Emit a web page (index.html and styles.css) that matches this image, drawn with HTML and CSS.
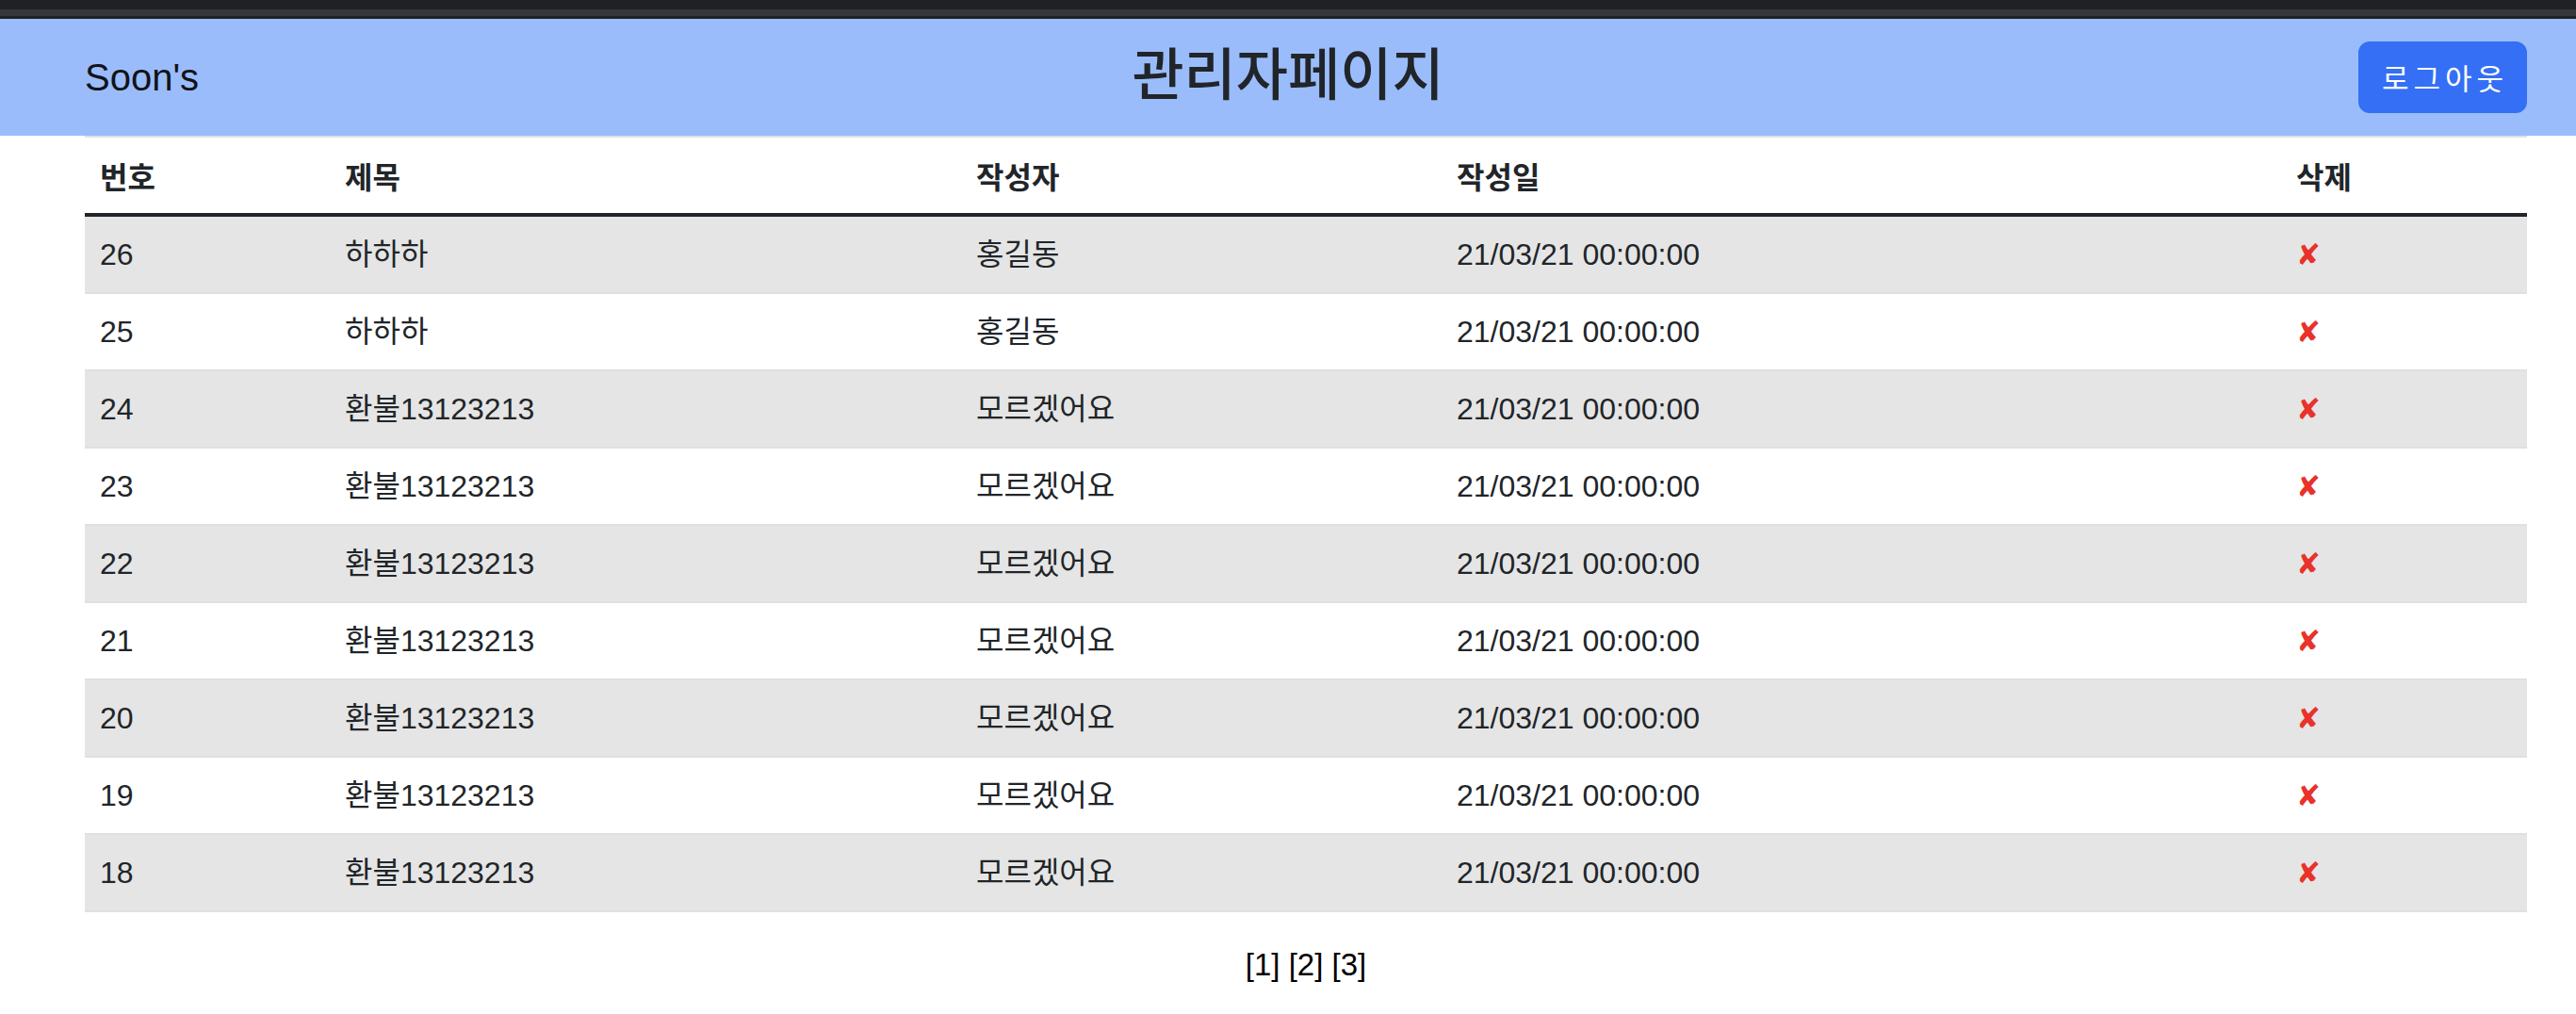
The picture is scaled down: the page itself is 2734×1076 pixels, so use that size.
FILE: index.html
```html
<!DOCTYPE html>
<html lang="ko">
<head>
<meta charset="utf-8">
<title>관리자페이지</title>
<link rel="stylesheet" href="styles.css">
</head>
<body>
<div class="chrome">
  <div class="chrome-top"></div>
  <div class="chrome-bar"></div>
  <div class="chrome-edge"></div>
</div>
<header class="topbar">
  <div class="brand-cell"><a class="brand">Soon's</a></div>
  <h3 class="title">관리자페이지</h3>
  <div class="actions"><button class="btn-logout" type="button">로그아웃</button></div>
</header>
<main class="content">
  <table class="board">
    <colgroup>
      <col class="c-num"><col class="c-title"><col class="c-writer"><col class="c-date"><col class="c-del">
    </colgroup>
    <thead>
      <tr><th>번호</th><th>제목</th><th>작성자</th><th>작성일</th><th>삭제</th></tr>
    </thead>
    <tbody>
      <tr><td>26</td><td>하하하</td><td>홍길동</td><td>21/03/21 00:00:00</td><td><span class="del">✘</span></td></tr>
      <tr><td>25</td><td>하하하</td><td>홍길동</td><td>21/03/21 00:00:00</td><td><span class="del">✘</span></td></tr>
      <tr><td>24</td><td>환불13123213</td><td>모르겠어요</td><td>21/03/21 00:00:00</td><td><span class="del">✘</span></td></tr>
      <tr><td>23</td><td>환불13123213</td><td>모르겠어요</td><td>21/03/21 00:00:00</td><td><span class="del">✘</span></td></tr>
      <tr><td>22</td><td>환불13123213</td><td>모르겠어요</td><td>21/03/21 00:00:00</td><td><span class="del">✘</span></td></tr>
      <tr><td>21</td><td>환불13123213</td><td>모르겠어요</td><td>21/03/21 00:00:00</td><td><span class="del">✘</span></td></tr>
      <tr><td>20</td><td>환불13123213</td><td>모르겠어요</td><td>21/03/21 00:00:00</td><td><span class="del">✘</span></td></tr>
      <tr><td>19</td><td>환불13123213</td><td>모르겠어요</td><td>21/03/21 00:00:00</td><td><span class="del">✘</span></td></tr>
      <tr><td>18</td><td>환불13123213</td><td>모르겠어요</td><td>21/03/21 00:00:00</td><td><span class="del">✘</span></td></tr>
    </tbody>
  </table>
  <div class="pager"><a>[1]</a> <a>[2]</a> <a>[3]</a></div>
</main>
</body>
</html>
```
FILE: styles.css
```css
html, body {
  margin: 0;
  padding: 0;
  background: #ffffff;
}
body {
  font-family: "Liberation Sans", "Noto Sans CJK KR", sans-serif;
  font-size: 32px;
  line-height: 48px;
  color: #212529;
}
.chrome-top { height: 10px; background: #202124; }
.chrome-bar { height: 7px; background: #36373b; }
.chrome-edge { height: 3px; background: #1f2023; }

.topbar {
  display: grid;
  grid-template-columns: 1fr auto 1fr;
  align-items: center;
  height: 124px;
  background: #9abcfa;
}
.brand-cell { padding-left: 90px; }
.brand {
  font-size: 40px;
  line-height: 60px;
  color: #111318;
  text-decoration: none;
}
.title {
  margin: 0 0 14px;
  font-family: "Noto Sans CJK KR", sans-serif;
  font-size: 60px;
  font-weight: 500;
  line-height: 1.2;
  color: #212529;
}
.actions {
  display: flex;
  justify-content: flex-end;
  padding-right: 52px;
}
.btn-logout {
  font-family: "Noto Sans CJK KR", sans-serif;
  font-size: 31px;
  line-height: 48px;
  letter-spacing: 5px;
  padding: 12px 18px 12px 23px;
  border: 2px solid #346ff5;
  border-radius: 12px;
  background: #346ff5;
  color: #ffffff;
}

.content {
  margin: 0 52px 0 90px;
}
.board {
  width: 100%;
  border-collapse: collapse;
  table-layout: fixed;
  border-top: 2px solid #dee2e6;
  margin-bottom: 32px;
}
.c-num { width: 260px; }
.c-title { width: 670px; }
.c-writer { width: 510px; }
.c-date { width: 891px; }
.c-del { width: 261px; }

.board th {
  text-align: left;
  font-family: "Noto Sans CJK KR", sans-serif;
  font-weight: 700;
  height: 80px;
  padding: 0 16px;
  line-height: 40px;
  vertical-align: middle;
  color: #212529;
}
.board thead tr { border-bottom: 4px solid #212529; }
.board td {
  height: 80px;
  padding: 0 16px;
  line-height: 40px;
  vertical-align: middle;
  border-bottom: 2px solid #dde0e4;
  white-space: nowrap;
}
.board tbody tr:nth-child(odd) td { background: #e5e5e5; }

.del {
  font-family: "DejaVu Sans", sans-serif;
  font-size: 31px;
  color: #e8322a;
}

.pager {
  text-align: center;
  font-size: 33px;
  color: #000000;
}
.pager a { color: #000000; }
```
